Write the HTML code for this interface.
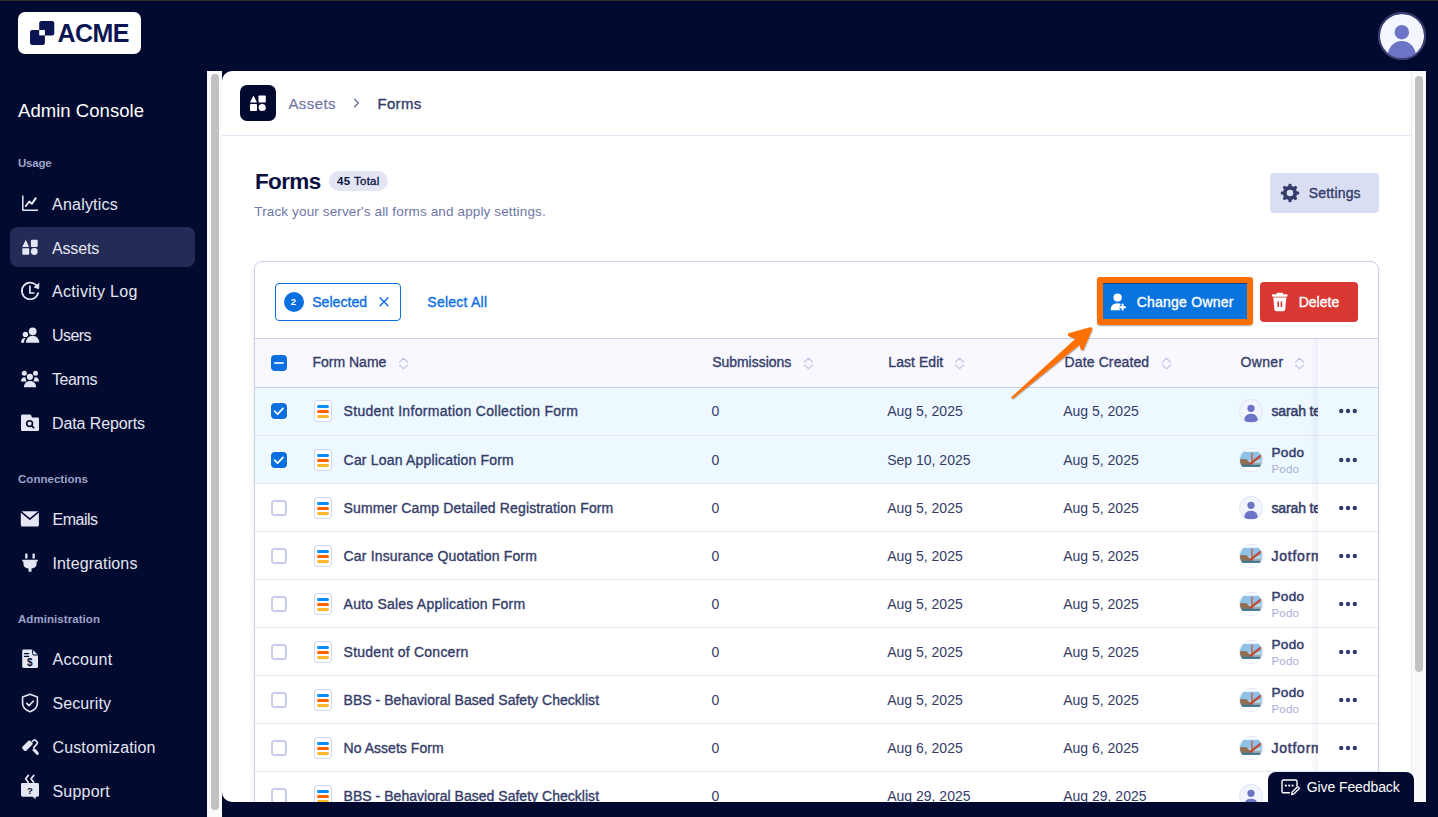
<!DOCTYPE html>
<html><head><meta charset="utf-8"><title>Forms - Admin Console</title>
<style>
html,body{margin:0;padding:0;}
body{width:1438px;height:817px;overflow:hidden;position:relative;font-family:"Liberation Sans", sans-serif;background:#020a30;}
.t{position:absolute;white-space:pre;}
.a{position:absolute;}

</style></head><body>
<div class="a" style="left:0;top:0;width:1438px;height:1px;background:#2d2d2b"></div><div class="a" style="left:18px;top:12px;width:123px;height:42px;background:#fff;border-radius:7px"></div><svg class="a" style="left:0;top:0" width="1438" height="817" viewBox="0 0 1438 817">
<g fill="#0a1551">
<rect x="39.2" y="21" width="15.1" height="14.4" rx="2.2"/>
<rect x="30" y="30" width="14.9" height="15" rx="2.2"/>
</g>
<rect x="39.2" y="30" width="5.7" height="5.4" fill="#fff"/>
</svg><div class="t" style="left:57.5px;top:19px;font-size:25px;line-height:28px;font-weight:700;color:#0a1551;letter-spacing:-0.527px;">ACME</div><svg class="a" style="left:1377px;top:11px" width="50" height="50" viewBox="0 0 50 50">
<defs><clipPath id="avc"><circle cx="25" cy="25" r="22.5"/></clipPath></defs>
<circle cx="25" cy="25" r="23" fill="#f3f6fe" stroke="#3b3e72" stroke-width="1.8"/>
<g clip-path="url(#avc)" fill="#6c74c6">
<circle cx="24.8" cy="21.2" r="7.2"/>
<ellipse cx="24.8" cy="44.5" rx="14" ry="14.5"/>
</g>
<circle cx="25" cy="25" r="23" fill="none" stroke="#3b3e72" stroke-width="1.8"/>
</svg><div class="t" style="left:18px;top:100px;font-size:18.5px;line-height:21px;font-weight:400;color:#ffffff;letter-spacing:0.042px;">Admin Console</div><div class="t" style="left:18px;top:157px;font-size:11.5px;line-height:12px;font-weight:700;color:#9ca2c9;letter-spacing:-0.206px;">Usage</div><div class="a" style="left:10px;top:227px;width:185px;height:40px;background:#242b57;border-radius:8px"></div><div class="t" style="left:52px;top:195.5px;font-size:16px;line-height:17px;font-weight:400;color:#e4e6f3;letter-spacing:0.219px;">Analytics</div><div class="t" style="left:52px;top:239.5px;font-size:16px;line-height:17px;font-weight:400;color:#e4e6f3;letter-spacing:-0.169px;">Assets</div><div class="t" style="left:52px;top:283.3px;font-size:16px;line-height:17px;font-weight:400;color:#e4e6f3;letter-spacing:0.316px;">Activity Log</div><div class="t" style="left:52px;top:327.3px;font-size:16px;line-height:17px;font-weight:400;color:#e4e6f3;letter-spacing:-0.556px;">Users</div><div class="t" style="left:52px;top:371.3px;font-size:16px;line-height:17px;font-weight:400;color:#e4e6f3;letter-spacing:-0.425px;">Teams</div><div class="t" style="left:52px;top:415.3px;font-size:16px;line-height:17px;font-weight:400;color:#e4e6f3;letter-spacing:-0.105px;">Data Reports</div><div class="t" style="left:18px;top:473.3px;font-size:11.5px;line-height:12px;font-weight:700;color:#9ca2c9;letter-spacing:0.033px;">Connections</div><div class="t" style="left:52.5px;top:511px;font-size:16px;line-height:17px;font-weight:400;color:#e4e6f3;letter-spacing:-0.503px;">Emails</div><div class="t" style="left:52.5px;top:555px;font-size:16px;line-height:17px;font-weight:400;color:#e4e6f3;letter-spacing:0.116px;">Integrations</div><div class="t" style="left:18px;top:612.8px;font-size:11.5px;line-height:12px;font-weight:700;color:#9ca2c9;letter-spacing:0.061px;">Administration</div><div class="t" style="left:52.5px;top:651.3px;font-size:16px;line-height:17px;font-weight:400;color:#e4e6f3;letter-spacing:0.312px;">Account</div><div class="t" style="left:52.5px;top:695.3px;font-size:16px;line-height:17px;font-weight:400;color:#e4e6f3;letter-spacing:0.088px;">Security</div><div class="t" style="left:52.5px;top:739.2px;font-size:16px;line-height:17px;font-weight:400;color:#e4e6f3;letter-spacing:0.125px;">Customization</div><div class="t" style="left:52.5px;top:783.2px;font-size:16px;line-height:17px;font-weight:400;color:#e4e6f3;letter-spacing:0.193px;">Support</div><svg class="a" style="left:0;top:0" width="220" height="817" viewBox="0 0 220 817">
<g fill="none" stroke="#e4e6f3" stroke-linecap="round" stroke-linejoin="round">
 <path d="M22.8 195.5 V210.2 H38" stroke-width="1.5" stroke-linecap="butt"/>
 <path d="M25.8 206 L29.3 201.5 L31.8 203.8 L35.8 198.2" stroke-width="2"/>
</g>
<g fill="#e4e6f3">
 <path d="M25.75 239.8 L29.2 247 H22.3 Z"/>
 <rect x="30.9" y="239.8" width="6.8" height="7.2" rx="1"/>
 <rect x="22.3" y="248.2" width="6.9" height="6.6" rx="1"/>
 <circle cx="34.3" cy="251.5" r="3.4"/>
</g>
<g fill="none" stroke="#e4e6f3" stroke-width="1.7" stroke-linecap="round" stroke-linejoin="round">
 <path d="M38.2 293 A8.3 8.3 0 1 1 36.2 285.2"/>
 <path d="M29.9 286.2 V293 H33.8"/>
</g>
<path d="M38.9 283.6 L38.6 288.6 L34.2 287.2 Z" fill="#e4e6f3" stroke="#e4e6f3" stroke-width="1" stroke-linejoin="round"/>
<g fill="#e4e6f3">
 <circle cx="32.7" cy="331.3" r="3.9"/>
 <path d="M25.9 342.7 C25.9 338.5 29 335.7 32.6 335.7 C36.2 335.7 39.3 338.5 39.3 342.7 Z"/>
 <circle cx="25.4" cy="334.4" r="2.7"/>
 <path d="M21 342.7 C21 339.8 22.6 337.9 24.8 337.9 L25.6 338.1 C24.6 339.3 24.1 340.9 24.1 342.7 Z"/>
 <circle cx="24.3" cy="373.2" r="2.5"/>
 <circle cx="35.5" cy="373.2" r="2.5"/>
 <circle cx="29.9" cy="376.8" r="3.1"/>
 <path d="M21 381.6 C21 379 22.3 377.3 24.4 377.3 C25 377.3 25.4 377.5 25.8 377.7 C25.6 379 26 380.3 26.8 381.6 Z"/>
 <path d="M39 381.6 C39 379 37.7 377.3 35.6 377.3 C35 377.3 34.6 377.5 34.2 377.7 C34.4 379 34 380.3 33.2 381.6 Z"/>
 <path d="M23.9 387.3 C23.9 383.5 26.6 381.1 30 381.1 C33.4 381.1 36.1 383.5 36.1 387.3 Z"/>
 <path d="M21 415.8 Q21 414.5 22.3 414.5 H29.8 Q30.6 414.5 31.1 415.3 L32 417.6 H37.7 Q39 417.6 39 418.9 V429.7 Q39 431 37.7 431 H22.3 Q21 431 21 429.7 Z"/>
 <rect x="20.8" y="511.2" width="18.1" height="15.4" rx="1.6"/>
 <rect x="25.2" y="553.6" width="2.3" height="5" rx="0.5"/>
 <rect x="32.5" y="553.6" width="2.3" height="5" rx="0.5"/>
 <path d="M22.2 559.8 H37.8 V561.6 H36.6 V563.5 Q36.6 568.2 31.5 568.4 V571.8 H28.5 V568.4 Q23.4 568.2 23.4 563.5 V561.6 H22.2 Z"/>
 <path d="M22.2 651 Q22.2 649.6 23.6 649.6 H32.6 L38 655 V666.5 Q38 667.9 36.6 667.9 H23.6 Q22.2 667.9 22.2 666.5 Z"/>
 <rect x="-5.6" y="-2.7" width="11.2" height="5.4" rx="1.4" transform="translate(27.35 745.75) rotate(-45)"/>
 <path d="M22.2 783 H37.6 Q39 783 39 784.4 V795.3 Q39 796.7 37.6 796.7 H35.6 L35.6 799.2 L32.6 796.7 H22.4 Q21 796.7 21 795.3 V784.4 Q21 783 22.2 783 Z"/>
</g>
<g fill="none" stroke="#020a30" stroke-linecap="round" stroke-linejoin="round">
 <circle cx="29.6" cy="423.6" r="2.9" stroke-width="1.6"/>
 <path d="M31.8 425.9 L33.6 427.6" stroke-width="1.8"/>
 <path d="M21.4 512.2 L29.85 519.2 L38.3 512.2" stroke-width="1.5"/>
 <path d="M24.6 653.6 H28.6 M24.6 656.4 H28.6" stroke-width="1.3"/>
 <path d="M32.6 649.6 V653.6 Q32.6 655 34 655 H38" stroke-width="1" stroke="#020a30"/>
</g>
<text x="29.8" y="666" font-family="Liberation Sans" font-weight="700" font-size="10" fill="#020a30" text-anchor="middle">$</text>
<text x="29.9" y="793.6" font-family="Liberation Sans" font-weight="700" font-size="9.5" fill="#020a30" text-anchor="middle">?</text>
<g fill="none" stroke="#e4e6f3" stroke-width="1.6" stroke-linecap="round" stroke-linejoin="round">
 <path d="M30 694.2 L37.4 697 V703.2 Q37.4 708.8 30 711.8 Q22.6 708.8 22.6 703.2 V697 Z"/>
 <path d="M26.7 703.3 L29.1 705.6 L33.4 701"/>
 <path d="M32.4 741.4 L33.9 740 Q34.6 739.4 35.3 740.1 L37.2 742.1 Q37.9 742.9 37.2 743.6 L33.7 747.6"/>
 <path d="M34 749.8 L37.3 753.3" stroke-width="3.1"/>
 <path d="M28.4 775.4 L25.6 778.7 L28.2 782.3 M33.8 775.4 L31 778.7 L33.6 782.3" stroke-width="1.7"/>
</g>
</svg><div class="a" style="left:207px;top:71px;width:15px;height:746px;background:#fafafa"></div><div class="a" style="left:211px;top:74px;width:8px;height:736px;background:#c1c1c1;border-radius:4px"></div><div class="a" style="left:222px;top:71px;width:1204px;height:731px;background:#fff;border-radius:10px 0 0 10px;overflow:hidden"><div class="a" style="left:0px;top:63.5px;width:1189px;height:1px;background:#e3e6f5"></div><div class="a" style="left:18px;top:14px;width:36px;height:36px;background:#020a30;border-radius:7px"></div><svg class="a" style="left:28px;top:24px" width="17" height="17" viewBox="0 0 17 17"><g fill="#fff">
<path d="M3.5 0.4 L7 7.5 H0 Z"/><rect x="8.5" y="0.5" width="7.3" height="7" rx="1"/>
<rect x="0" y="9" width="7" height="7" rx="1"/><circle cx="12.2" cy="12.5" r="3.6"/></g></svg><div class="t" style="left:66.4px;top:24px;font-size:15px;line-height:17px;font-weight:400;color:#6f76a7;letter-spacing:0.414px;-webkit-text-stroke:0.2px currentColor;">Assets</div><svg class="a" style="left:130px;top:26px" width="10" height="12" viewBox="0 0 10 12"><path d="M2.6 2.2 L6.4 6 L2.6 9.8" fill="none" stroke="#6f76a7" stroke-width="1.5" stroke-linecap="round" stroke-linejoin="round"/></svg><div class="t" style="left:155.5px;top:24px;font-size:15px;line-height:17px;font-weight:400;color:#343c6a;letter-spacing:0.300px;-webkit-text-stroke:0.35px currentColor;">Forms</div><div class="t" style="left:33px;top:98px;font-size:22.5px;line-height:25px;font-weight:700;color:#0a1040;letter-spacing:-0.653px;">Forms</div><div class="a" style="left:107px;top:100px;width:59px;height:20px;background:#e3e5f5;border-radius:10px"></div><div class="t" style="left:115px;top:104px;font-size:11.5px;line-height:12px;font-weight:700;color:#0a1040;letter-spacing:0.402px;">45</div><div class="t" style="left:132px;top:104px;font-size:11.5px;line-height:12px;font-weight:400;color:#0a1040;letter-spacing:0.241px;-webkit-text-stroke:0.3px currentColor;">Total</div><div class="t" style="left:32.3px;top:132.6px;font-size:13.5px;line-height:15px;font-weight:400;color:#6f76a7;letter-spacing:0.134px;">Track your server&#x27;s all forms and apply settings.</div><div class="a" style="left:1048px;top:102px;width:109px;height:40px;background:#dadef3;border-radius:4px"></div><svg class="a" style="left:1058px;top:112px" width="20" height="20" viewBox="0 0 20 20">
<g transform="translate(10,10)" fill="#343c6a">
<circle r="7.2"/>
<g id="teeth">
<rect x="-1.6" y="-9.2" width="3.2" height="4" rx="1.2"/>
<rect x="-1.6" y="-9.2" width="3.2" height="4" rx="1.2" transform="rotate(45)"/>
<rect x="-1.6" y="-9.2" width="3.2" height="4" rx="1.2" transform="rotate(90)"/>
<rect x="-1.6" y="-9.2" width="3.2" height="4" rx="1.2" transform="rotate(135)"/>
<rect x="-1.6" y="-9.2" width="3.2" height="4" rx="1.2" transform="rotate(180)"/>
<rect x="-1.6" y="-9.2" width="3.2" height="4" rx="1.2" transform="rotate(225)"/>
<rect x="-1.6" y="-9.2" width="3.2" height="4" rx="1.2" transform="rotate(270)"/>
<rect x="-1.6" y="-9.2" width="3.2" height="4" rx="1.2" transform="rotate(315)"/>
</g>
<circle r="3.3" fill="#dadef3"/>
</g></svg><div class="t" style="left:1086.8px;top:113.7px;font-size:14px;line-height:16px;font-weight:400;color:#343c6a;letter-spacing:0.176px;-webkit-text-stroke:0.35px currentColor;">Settings</div><div class="a" style="left:27px;top:197px;width:5px;height:560px;background:linear-gradient(to right, rgba(0,0,0,0), rgba(0,0,0,0.035))"></div><div class="a" style="left:1157px;top:197px;width:4px;height:560px;background:linear-gradient(to left, rgba(0,0,0,0), rgba(0,0,0,0.03))"></div><div class="a" style="left:32px;top:190px;width:1125px;height:600px;box-sizing:border-box;border:1px solid #c9ceec;border-radius:8px"></div><div class="a" style="left:53px;top:212px;width:126px;height:38px;box-sizing:border-box;border:1px solid #0a6fdf;border-radius:4px"></div><div class="a" style="left:62px;top:221px;width:20px;height:20px;background:#0a6fdf;border-radius:50%"></div><div class="t" style="left:68.8px;top:225.3px;font-size:9.5px;line-height:11px;font-weight:700;color:#fff;">2</div><div class="t" style="left:90.2px;top:222.8px;font-size:14px;line-height:16px;font-weight:400;color:#0a6fdf;letter-spacing:0.064px;-webkit-text-stroke:0.35px currentColor;">Selected</div><svg class="a" style="left:156px;top:225px" width="12" height="12" viewBox="0 0 12 12"><path d="M2 1.7 L10 9.7 M10 1.7 L2 9.7" stroke="#0a6fdf" stroke-width="1.4" stroke-linecap="round"/></svg><div class="t" style="left:205.3px;top:222.8px;font-size:14px;line-height:16px;font-weight:400;color:#0a6fdf;letter-spacing:0.241px;-webkit-text-stroke:0.35px currentColor;">Select All</div><div class="a" style="left:1038px;top:211px;width:98px;height:40px;background:#d93832;border-radius:4px"></div><svg class="a" style="left:1049px;top:221px" width="18" height="20" viewBox="0 0 18 20">
<g fill="#fff"><rect x="1" y="2.2" width="15.6" height="2.6" rx="1"/><rect x="5.5" y="0.8" width="6.6" height="2.4" rx="1"/>
<path d="M2.3 5.6 H15.3 L14.2 17.6 Q14 19.3 12.3 19.3 H5.3 Q3.6 19.3 3.4 17.6 Z"/></g>
<g fill="#d93832"><rect x="6.4" y="9.2" width="1.6" height="6" rx="0.8"/><rect x="9.6" y="9.2" width="1.6" height="6" rx="0.8"/></g></svg><div class="t" style="left:1076.7px;top:223px;font-size:14px;line-height:16px;font-weight:400;color:#fff;letter-spacing:0.005px;-webkit-text-stroke:0.35px currentColor;">Delete</div><div class="a" style="left:880px;top:211px;width:146px;height:40px;background:#0a74de;border-radius:4px"></div><svg class="a" style="left:887px;top:221px" width="20" height="20" viewBox="0 0 20 20">
<g fill="#fff"><circle cx="8.6" cy="5.6" r="4.1"/><path d="M1.6 18.2 Q1.6 11.2 8.6 11.2 Q10.6 11.2 12 12.1 Q10.3 13.4 10.3 15.4 Q10.3 17 11.3 18.2 Z"/>
<rect x="12.6" y="11.6" width="2" height="7.2" rx="1"/><rect x="10" y="14.2" width="7.2" height="2" rx="1"/></g></svg><div class="t" style="left:914.7px;top:223px;font-size:14px;line-height:16px;font-weight:400;color:#fff;letter-spacing:0.236px;-webkit-text-stroke:0.35px currentColor;">Change Owner</div><div class="a" style="left:33px;top:267px;width:1123px;height:49px;background:#f8f8fe;border-top:1px solid #c9ceec;border-bottom:1px solid #c9ceec;box-sizing:border-box;height:50px"></div><div class="a" style="left:49px;top:284px;width:16px;height:16px;background:#0a6fdf;border-radius:4px"></div><div class="a" style="left:51.80000000000001px;top:291px;width:10.5px;height:2px;background:#cfe5fa;border-radius:1px"></div><div class="t" style="left:90.4px;top:283.4px;font-size:14px;line-height:16px;font-weight:400;color:#343c6a;letter-spacing:0.010px;-webkit-text-stroke:0.35px currentColor;">Form Name</div><svg class="a" style="left:175.5px;top:285.5px" width="11" height="13" viewBox="0 0 11 13"><path d="M1.5 5 L5.5 1.2 L9.5 5 M1.5 8 L5.5 11.8 L9.5 8" fill="none" stroke="#c5cae9" stroke-width="1.3" stroke-linecap="round" stroke-linejoin="round"/></svg><div class="t" style="left:490.2px;top:283.4px;font-size:14px;line-height:16px;font-weight:400;color:#343c6a;letter-spacing:-0.034px;-webkit-text-stroke:0.35px currentColor;">Submissions</div><svg class="a" style="left:580.5px;top:285.5px" width="11" height="13" viewBox="0 0 11 13"><path d="M1.5 5 L5.5 1.2 L9.5 5 M1.5 8 L5.5 11.8 L9.5 8" fill="none" stroke="#c5cae9" stroke-width="1.3" stroke-linecap="round" stroke-linejoin="round"/></svg><div class="t" style="left:666.3px;top:283.4px;font-size:14px;line-height:16px;font-weight:400;color:#343c6a;letter-spacing:0.057px;-webkit-text-stroke:0.35px currentColor;">Last Edit</div><svg class="a" style="left:731.5px;top:285.5px" width="11" height="13" viewBox="0 0 11 13"><path d="M1.5 5 L5.5 1.2 L9.5 5 M1.5 8 L5.5 11.8 L9.5 8" fill="none" stroke="#c5cae9" stroke-width="1.3" stroke-linecap="round" stroke-linejoin="round"/></svg><div class="t" style="left:842.6px;top:283.4px;font-size:14px;line-height:16px;font-weight:400;color:#343c6a;letter-spacing:0.118px;-webkit-text-stroke:0.35px currentColor;">Date Created</div><svg class="a" style="left:938.5px;top:285.5px" width="11" height="13" viewBox="0 0 11 13"><path d="M1.5 5 L5.5 1.2 L9.5 5 M1.5 8 L5.5 11.8 L9.5 8" fill="none" stroke="#c5cae9" stroke-width="1.3" stroke-linecap="round" stroke-linejoin="round"/></svg><div class="t" style="left:1018.4px;top:283.4px;font-size:14px;line-height:16px;font-weight:400;color:#343c6a;letter-spacing:0.393px;-webkit-text-stroke:0.35px currentColor;">Owner</div><svg class="a" style="left:1072px;top:285.5px" width="11" height="13" viewBox="0 0 11 13"><path d="M1.5 5 L5.5 1.2 L9.5 5 M1.5 8 L5.5 11.8 L9.5 8" fill="none" stroke="#c5cae9" stroke-width="1.3" stroke-linecap="round" stroke-linejoin="round"/></svg><div class="a" style="left:33px;top:317px;width:1123px;height:48px;background:#edf8ff;border-bottom:1px solid #e3e5f5;box-sizing:border-box"></div><div class="a" style="left:48px;top:331px;width:18px;height:18px;background:#fff;border-radius:4px"></div><div class="a" style="left:49px;top:332px;width:16px;height:16px;background:#0a6fdf;border-radius:4px"></div><svg class="a" style="left:49px;top:332px" width="16" height="16" viewBox="0 0 16 16"><path d="M3.6 8.2 L6.6 11.1 L12 5.4" fill="none" stroke="#fff" stroke-width="1.7" stroke-linecap="round" stroke-linejoin="round"/></svg><div class="a" style="left:92px;top:329px;width:18px;height:22px;box-sizing:border-box;border:1px solid #d0d4ee;border-radius:3px;background:#fff"></div><div class="a" style="left:95px;top:334px;width:12px;height:3px;background:#0a8cff;border-radius:1.5px"></div><div class="a" style="left:95px;top:339px;width:12px;height:3px;background:#ff6100;border-radius:1.5px"></div><div class="a" style="left:95px;top:344px;width:12px;height:3px;background:#ffb629;border-radius:1.5px"></div><div class="t" style="left:121.6px;top:332px;font-size:14px;line-height:16px;font-weight:400;color:#343c6a;letter-spacing:0.303px;-webkit-text-stroke:0.35px currentColor;">Student Information Collection Form</div><div class="t" style="left:489.6px;top:332px;font-size:14px;line-height:16px;font-weight:400;color:#343c6a;">0</div><div class="t" style="left:665.2px;top:332px;font-size:14px;line-height:16px;font-weight:400;color:#343c6a;">Aug 5, 2025</div><div class="t" style="left:841.2px;top:332px;font-size:14px;line-height:16px;font-weight:400;color:#343c6a;">Aug 5, 2025</div><svg class="a" style="left:1017px;top:328px" width="24" height="24" viewBox="0 0 24 24">
<defs><clipPath id="oc0"><circle cx="12" cy="12" r="11.5"/></clipPath></defs>
<circle cx="12" cy="12" r="11.5" fill="#f3f5fe" stroke="#dfe2f5" stroke-width="1"/>
<g fill="#6c74c6" clip-path="url(#oc0)"><circle cx="12" cy="9.3" r="3.6"/><path d="M5 23 Q5 14.8 12 14.8 Q19 14.8 19 23 Z"/></g></svg><div class="t" style="left:1049.5px;top:332px;font-size:14px;line-height:16px;font-weight:400;color:#343c6a;letter-spacing:-0.148px;-webkit-text-stroke:0.5px currentColor;">sarah test</div><div class="a" style="left:33px;top:365px;width:1123px;height:48px;background:#edf8ff;border-bottom:1px solid #e3e5f5;box-sizing:border-box"></div><div class="a" style="left:48px;top:380px;width:18px;height:18px;background:#fff;border-radius:4px"></div><div class="a" style="left:49px;top:381px;width:16px;height:16px;background:#0a6fdf;border-radius:4px"></div><svg class="a" style="left:49px;top:381px" width="16" height="16" viewBox="0 0 16 16"><path d="M3.6 8.2 L6.6 11.1 L12 5.4" fill="none" stroke="#fff" stroke-width="1.7" stroke-linecap="round" stroke-linejoin="round"/></svg><div class="a" style="left:92px;top:378px;width:18px;height:22px;box-sizing:border-box;border:1px solid #d0d4ee;border-radius:3px;background:#fff"></div><div class="a" style="left:95px;top:383px;width:12px;height:3px;background:#0a8cff;border-radius:1.5px"></div><div class="a" style="left:95px;top:388px;width:12px;height:3px;background:#ff6100;border-radius:1.5px"></div><div class="a" style="left:95px;top:393px;width:12px;height:3px;background:#ffb629;border-radius:1.5px"></div><div class="t" style="left:121.6px;top:381px;font-size:14px;line-height:16px;font-weight:400;color:#343c6a;letter-spacing:0.185px;-webkit-text-stroke:0.35px currentColor;">Car Loan Application Form</div><div class="t" style="left:489.6px;top:381px;font-size:14px;line-height:16px;font-weight:400;color:#343c6a;">0</div><div class="t" style="left:665.2px;top:381px;font-size:14px;line-height:16px;font-weight:400;color:#343c6a;">Sep 10, 2025</div><div class="t" style="left:841.2px;top:381px;font-size:14px;line-height:16px;font-weight:400;color:#343c6a;">Aug 5, 2025</div><svg class="a" style="left:1017px;top:377px" width="24" height="24" viewBox="0 0 24 24">
<defs><clipPath id="oc1"><circle cx="12" cy="12" r="11"/></clipPath></defs>
<circle cx="12" cy="12" r="11.5" fill="#fff" stroke="#e2e4f5" stroke-width="1"/>
<g clip-path="url(#oc1)">
<rect x="0" y="0" width="24" height="24" fill="#fff"/>
<rect x="0" y="3.7" width="24" height="15.2" fill="#8fc2e9"/>
<rect x="0" y="12" width="24" height="5" fill="#b4d6ee"/>
<rect x="12" y="14.6" width="12" height="2.4" fill="#a3aeb2"/>
<path d="M0 11.4 Q3.5 10.6 7.5 11.2 Q9.5 12.5 11.8 16.2 L11.8 17 L0 17 Z" fill="#8e6f55"/>
<rect x="12.2" y="4.9" width="1.4" height="12.1" fill="#c9573f"/>
<path d="M11 16 L23.5 6.3" stroke="#bd4d39" stroke-width="2.3"/>
<rect x="0" y="16.8" width="24" height="2.1" fill="#3c7796"/>
</g></svg><div class="t" style="left:1049.5px;top:374px;font-size:13.5px;line-height:15px;font-weight:400;color:#343c6a;letter-spacing:0.367px;-webkit-text-stroke:0.5px currentColor;">Podo</div><div class="t" style="left:1049.5px;top:392px;font-size:11.5px;line-height:12px;font-weight:400;color:#a9aed6;letter-spacing:0.160px;">Podo</div><div class="a" style="left:33px;top:413px;width:1123px;height:48px;background:#ffffff;border-bottom:1px solid #e3e5f5;box-sizing:border-box"></div><div class="a" style="left:49px;top:429px;width:16px;height:16px;box-sizing:border-box;border:2px solid #c8cdeb;border-radius:3.5px;background:#fff"></div><div class="a" style="left:92px;top:426px;width:18px;height:22px;box-sizing:border-box;border:1px solid #d0d4ee;border-radius:3px;background:#fff"></div><div class="a" style="left:95px;top:431px;width:12px;height:3px;background:#0a8cff;border-radius:1.5px"></div><div class="a" style="left:95px;top:436px;width:12px;height:3px;background:#ff6100;border-radius:1.5px"></div><div class="a" style="left:95px;top:441px;width:12px;height:3px;background:#ffb629;border-radius:1.5px"></div><div class="t" style="left:121.6px;top:429px;font-size:14px;line-height:16px;font-weight:400;color:#343c6a;letter-spacing:0.139px;-webkit-text-stroke:0.35px currentColor;">Summer Camp Detailed Registration Form</div><div class="t" style="left:489.6px;top:429px;font-size:14px;line-height:16px;font-weight:400;color:#343c6a;">0</div><div class="t" style="left:665.2px;top:429px;font-size:14px;line-height:16px;font-weight:400;color:#343c6a;">Aug 5, 2025</div><div class="t" style="left:841.2px;top:429px;font-size:14px;line-height:16px;font-weight:400;color:#343c6a;">Aug 5, 2025</div><svg class="a" style="left:1017px;top:425px" width="24" height="24" viewBox="0 0 24 24">
<defs><clipPath id="oc2"><circle cx="12" cy="12" r="11.5"/></clipPath></defs>
<circle cx="12" cy="12" r="11.5" fill="#f3f5fe" stroke="#dfe2f5" stroke-width="1"/>
<g fill="#6c74c6" clip-path="url(#oc2)"><circle cx="12" cy="9.3" r="3.6"/><path d="M5 23 Q5 14.8 12 14.8 Q19 14.8 19 23 Z"/></g></svg><div class="t" style="left:1049.5px;top:429px;font-size:14px;line-height:16px;font-weight:400;color:#343c6a;letter-spacing:-0.148px;-webkit-text-stroke:0.5px currentColor;">sarah test</div><div class="a" style="left:33px;top:461px;width:1123px;height:48px;background:#ffffff;border-bottom:1px solid #e3e5f5;box-sizing:border-box"></div><div class="a" style="left:49px;top:477px;width:16px;height:16px;box-sizing:border-box;border:2px solid #c8cdeb;border-radius:3.5px;background:#fff"></div><div class="a" style="left:92px;top:474px;width:18px;height:22px;box-sizing:border-box;border:1px solid #d0d4ee;border-radius:3px;background:#fff"></div><div class="a" style="left:95px;top:479px;width:12px;height:3px;background:#0a8cff;border-radius:1.5px"></div><div class="a" style="left:95px;top:484px;width:12px;height:3px;background:#ff6100;border-radius:1.5px"></div><div class="a" style="left:95px;top:489px;width:12px;height:3px;background:#ffb629;border-radius:1.5px"></div><div class="t" style="left:121.6px;top:477px;font-size:14px;line-height:16px;font-weight:400;color:#343c6a;letter-spacing:0.154px;-webkit-text-stroke:0.35px currentColor;">Car Insurance Quotation Form</div><div class="t" style="left:489.6px;top:477px;font-size:14px;line-height:16px;font-weight:400;color:#343c6a;">0</div><div class="t" style="left:665.2px;top:477px;font-size:14px;line-height:16px;font-weight:400;color:#343c6a;">Aug 5, 2025</div><div class="t" style="left:841.2px;top:477px;font-size:14px;line-height:16px;font-weight:400;color:#343c6a;">Aug 5, 2025</div><svg class="a" style="left:1017px;top:473px" width="24" height="24" viewBox="0 0 24 24">
<defs><clipPath id="oc3"><circle cx="12" cy="12" r="11"/></clipPath></defs>
<circle cx="12" cy="12" r="11.5" fill="#fff" stroke="#e2e4f5" stroke-width="1"/>
<g clip-path="url(#oc3)">
<rect x="0" y="0" width="24" height="24" fill="#fff"/>
<rect x="0" y="3.7" width="24" height="15.2" fill="#8fc2e9"/>
<rect x="0" y="12" width="24" height="5" fill="#b4d6ee"/>
<rect x="12" y="14.6" width="12" height="2.4" fill="#a3aeb2"/>
<path d="M0 11.4 Q3.5 10.6 7.5 11.2 Q9.5 12.5 11.8 16.2 L11.8 17 L0 17 Z" fill="#8e6f55"/>
<rect x="12.2" y="4.9" width="1.4" height="12.1" fill="#c9573f"/>
<path d="M11 16 L23.5 6.3" stroke="#bd4d39" stroke-width="2.3"/>
<rect x="0" y="16.8" width="24" height="2.1" fill="#3c7796"/>
</g></svg><div class="t" style="left:1049.5px;top:477px;font-size:14px;line-height:16px;font-weight:400;color:#343c6a;letter-spacing:0.759px;-webkit-text-stroke:0.5px currentColor;">Jotform</div><div class="a" style="left:33px;top:509px;width:1123px;height:48px;background:#ffffff;border-bottom:1px solid #e3e5f5;box-sizing:border-box"></div><div class="a" style="left:49px;top:525px;width:16px;height:16px;box-sizing:border-box;border:2px solid #c8cdeb;border-radius:3.5px;background:#fff"></div><div class="a" style="left:92px;top:522px;width:18px;height:22px;box-sizing:border-box;border:1px solid #d0d4ee;border-radius:3px;background:#fff"></div><div class="a" style="left:95px;top:527px;width:12px;height:3px;background:#0a8cff;border-radius:1.5px"></div><div class="a" style="left:95px;top:532px;width:12px;height:3px;background:#ff6100;border-radius:1.5px"></div><div class="a" style="left:95px;top:537px;width:12px;height:3px;background:#ffb629;border-radius:1.5px"></div><div class="t" style="left:121.6px;top:525px;font-size:14px;line-height:16px;font-weight:400;color:#343c6a;letter-spacing:0.219px;-webkit-text-stroke:0.35px currentColor;">Auto Sales Application Form</div><div class="t" style="left:489.6px;top:525px;font-size:14px;line-height:16px;font-weight:400;color:#343c6a;">0</div><div class="t" style="left:665.2px;top:525px;font-size:14px;line-height:16px;font-weight:400;color:#343c6a;">Aug 5, 2025</div><div class="t" style="left:841.2px;top:525px;font-size:14px;line-height:16px;font-weight:400;color:#343c6a;">Aug 5, 2025</div><svg class="a" style="left:1017px;top:521px" width="24" height="24" viewBox="0 0 24 24">
<defs><clipPath id="oc4"><circle cx="12" cy="12" r="11"/></clipPath></defs>
<circle cx="12" cy="12" r="11.5" fill="#fff" stroke="#e2e4f5" stroke-width="1"/>
<g clip-path="url(#oc4)">
<rect x="0" y="0" width="24" height="24" fill="#fff"/>
<rect x="0" y="3.7" width="24" height="15.2" fill="#8fc2e9"/>
<rect x="0" y="12" width="24" height="5" fill="#b4d6ee"/>
<rect x="12" y="14.6" width="12" height="2.4" fill="#a3aeb2"/>
<path d="M0 11.4 Q3.5 10.6 7.5 11.2 Q9.5 12.5 11.8 16.2 L11.8 17 L0 17 Z" fill="#8e6f55"/>
<rect x="12.2" y="4.9" width="1.4" height="12.1" fill="#c9573f"/>
<path d="M11 16 L23.5 6.3" stroke="#bd4d39" stroke-width="2.3"/>
<rect x="0" y="16.8" width="24" height="2.1" fill="#3c7796"/>
</g></svg><div class="t" style="left:1049.5px;top:518px;font-size:13.5px;line-height:15px;font-weight:400;color:#343c6a;letter-spacing:0.367px;-webkit-text-stroke:0.5px currentColor;">Podo</div><div class="t" style="left:1049.5px;top:536px;font-size:11.5px;line-height:12px;font-weight:400;color:#a9aed6;letter-spacing:0.160px;">Podo</div><div class="a" style="left:33px;top:557px;width:1123px;height:48px;background:#ffffff;border-bottom:1px solid #e3e5f5;box-sizing:border-box"></div><div class="a" style="left:49px;top:573px;width:16px;height:16px;box-sizing:border-box;border:2px solid #c8cdeb;border-radius:3.5px;background:#fff"></div><div class="a" style="left:92px;top:570px;width:18px;height:22px;box-sizing:border-box;border:1px solid #d0d4ee;border-radius:3px;background:#fff"></div><div class="a" style="left:95px;top:575px;width:12px;height:3px;background:#0a8cff;border-radius:1.5px"></div><div class="a" style="left:95px;top:580px;width:12px;height:3px;background:#ff6100;border-radius:1.5px"></div><div class="a" style="left:95px;top:585px;width:12px;height:3px;background:#ffb629;border-radius:1.5px"></div><div class="t" style="left:121.6px;top:573px;font-size:14px;line-height:16px;font-weight:400;color:#343c6a;letter-spacing:0.242px;-webkit-text-stroke:0.35px currentColor;">Student of Concern</div><div class="t" style="left:489.6px;top:573px;font-size:14px;line-height:16px;font-weight:400;color:#343c6a;">0</div><div class="t" style="left:665.2px;top:573px;font-size:14px;line-height:16px;font-weight:400;color:#343c6a;">Aug 5, 2025</div><div class="t" style="left:841.2px;top:573px;font-size:14px;line-height:16px;font-weight:400;color:#343c6a;">Aug 5, 2025</div><svg class="a" style="left:1017px;top:569px" width="24" height="24" viewBox="0 0 24 24">
<defs><clipPath id="oc5"><circle cx="12" cy="12" r="11"/></clipPath></defs>
<circle cx="12" cy="12" r="11.5" fill="#fff" stroke="#e2e4f5" stroke-width="1"/>
<g clip-path="url(#oc5)">
<rect x="0" y="0" width="24" height="24" fill="#fff"/>
<rect x="0" y="3.7" width="24" height="15.2" fill="#8fc2e9"/>
<rect x="0" y="12" width="24" height="5" fill="#b4d6ee"/>
<rect x="12" y="14.6" width="12" height="2.4" fill="#a3aeb2"/>
<path d="M0 11.4 Q3.5 10.6 7.5 11.2 Q9.5 12.5 11.8 16.2 L11.8 17 L0 17 Z" fill="#8e6f55"/>
<rect x="12.2" y="4.9" width="1.4" height="12.1" fill="#c9573f"/>
<path d="M11 16 L23.5 6.3" stroke="#bd4d39" stroke-width="2.3"/>
<rect x="0" y="16.8" width="24" height="2.1" fill="#3c7796"/>
</g></svg><div class="t" style="left:1049.5px;top:566px;font-size:13.5px;line-height:15px;font-weight:400;color:#343c6a;letter-spacing:0.367px;-webkit-text-stroke:0.5px currentColor;">Podo</div><div class="t" style="left:1049.5px;top:584px;font-size:11.5px;line-height:12px;font-weight:400;color:#a9aed6;letter-spacing:0.160px;">Podo</div><div class="a" style="left:33px;top:605px;width:1123px;height:48px;background:#ffffff;border-bottom:1px solid #e3e5f5;box-sizing:border-box"></div><div class="a" style="left:49px;top:621px;width:16px;height:16px;box-sizing:border-box;border:2px solid #c8cdeb;border-radius:3.5px;background:#fff"></div><div class="a" style="left:92px;top:618px;width:18px;height:22px;box-sizing:border-box;border:1px solid #d0d4ee;border-radius:3px;background:#fff"></div><div class="a" style="left:95px;top:623px;width:12px;height:3px;background:#0a8cff;border-radius:1.5px"></div><div class="a" style="left:95px;top:628px;width:12px;height:3px;background:#ff6100;border-radius:1.5px"></div><div class="a" style="left:95px;top:633px;width:12px;height:3px;background:#ffb629;border-radius:1.5px"></div><div class="t" style="left:121.6px;top:621px;font-size:14px;line-height:16px;font-weight:400;color:#343c6a;letter-spacing:0.026px;-webkit-text-stroke:0.35px currentColor;">BBS - Behavioral Based Safety Checklist</div><div class="t" style="left:489.6px;top:621px;font-size:14px;line-height:16px;font-weight:400;color:#343c6a;">0</div><div class="t" style="left:665.2px;top:621px;font-size:14px;line-height:16px;font-weight:400;color:#343c6a;">Aug 5, 2025</div><div class="t" style="left:841.2px;top:621px;font-size:14px;line-height:16px;font-weight:400;color:#343c6a;">Aug 5, 2025</div><svg class="a" style="left:1017px;top:617px" width="24" height="24" viewBox="0 0 24 24">
<defs><clipPath id="oc6"><circle cx="12" cy="12" r="11"/></clipPath></defs>
<circle cx="12" cy="12" r="11.5" fill="#fff" stroke="#e2e4f5" stroke-width="1"/>
<g clip-path="url(#oc6)">
<rect x="0" y="0" width="24" height="24" fill="#fff"/>
<rect x="0" y="3.7" width="24" height="15.2" fill="#8fc2e9"/>
<rect x="0" y="12" width="24" height="5" fill="#b4d6ee"/>
<rect x="12" y="14.6" width="12" height="2.4" fill="#a3aeb2"/>
<path d="M0 11.4 Q3.5 10.6 7.5 11.2 Q9.5 12.5 11.8 16.2 L11.8 17 L0 17 Z" fill="#8e6f55"/>
<rect x="12.2" y="4.9" width="1.4" height="12.1" fill="#c9573f"/>
<path d="M11 16 L23.5 6.3" stroke="#bd4d39" stroke-width="2.3"/>
<rect x="0" y="16.8" width="24" height="2.1" fill="#3c7796"/>
</g></svg><div class="t" style="left:1049.5px;top:614px;font-size:13.5px;line-height:15px;font-weight:400;color:#343c6a;letter-spacing:0.367px;-webkit-text-stroke:0.5px currentColor;">Podo</div><div class="t" style="left:1049.5px;top:632px;font-size:11.5px;line-height:12px;font-weight:400;color:#a9aed6;letter-spacing:0.160px;">Podo</div><div class="a" style="left:33px;top:653px;width:1123px;height:48px;background:#ffffff;border-bottom:1px solid #e3e5f5;box-sizing:border-box"></div><div class="a" style="left:49px;top:669px;width:16px;height:16px;box-sizing:border-box;border:2px solid #c8cdeb;border-radius:3.5px;background:#fff"></div><div class="a" style="left:92px;top:666px;width:18px;height:22px;box-sizing:border-box;border:1px solid #d0d4ee;border-radius:3px;background:#fff"></div><div class="a" style="left:95px;top:671px;width:12px;height:3px;background:#0a8cff;border-radius:1.5px"></div><div class="a" style="left:95px;top:676px;width:12px;height:3px;background:#ff6100;border-radius:1.5px"></div><div class="a" style="left:95px;top:681px;width:12px;height:3px;background:#ffb629;border-radius:1.5px"></div><div class="t" style="left:121.6px;top:669px;font-size:14px;line-height:16px;font-weight:400;color:#343c6a;letter-spacing:0.029px;-webkit-text-stroke:0.35px currentColor;">No Assets Form</div><div class="t" style="left:489.6px;top:669px;font-size:14px;line-height:16px;font-weight:400;color:#343c6a;">0</div><div class="t" style="left:665.2px;top:669px;font-size:14px;line-height:16px;font-weight:400;color:#343c6a;">Aug 6, 2025</div><div class="t" style="left:841.2px;top:669px;font-size:14px;line-height:16px;font-weight:400;color:#343c6a;">Aug 6, 2025</div><svg class="a" style="left:1017px;top:665px" width="24" height="24" viewBox="0 0 24 24">
<defs><clipPath id="oc7"><circle cx="12" cy="12" r="11"/></clipPath></defs>
<circle cx="12" cy="12" r="11.5" fill="#fff" stroke="#e2e4f5" stroke-width="1"/>
<g clip-path="url(#oc7)">
<rect x="0" y="0" width="24" height="24" fill="#fff"/>
<rect x="0" y="3.7" width="24" height="15.2" fill="#8fc2e9"/>
<rect x="0" y="12" width="24" height="5" fill="#b4d6ee"/>
<rect x="12" y="14.6" width="12" height="2.4" fill="#a3aeb2"/>
<path d="M0 11.4 Q3.5 10.6 7.5 11.2 Q9.5 12.5 11.8 16.2 L11.8 17 L0 17 Z" fill="#8e6f55"/>
<rect x="12.2" y="4.9" width="1.4" height="12.1" fill="#c9573f"/>
<path d="M11 16 L23.5 6.3" stroke="#bd4d39" stroke-width="2.3"/>
<rect x="0" y="16.8" width="24" height="2.1" fill="#3c7796"/>
</g></svg><div class="t" style="left:1049.5px;top:669px;font-size:14px;line-height:16px;font-weight:400;color:#343c6a;letter-spacing:0.759px;-webkit-text-stroke:0.5px currentColor;">Jotform</div><div class="a" style="left:33px;top:701px;width:1123px;height:48px;background:#ffffff;border-bottom:1px solid #e3e5f5;box-sizing:border-box"></div><div class="a" style="left:49px;top:717px;width:16px;height:16px;box-sizing:border-box;border:2px solid #c8cdeb;border-radius:3.5px;background:#fff"></div><div class="a" style="left:92px;top:714px;width:18px;height:22px;box-sizing:border-box;border:1px solid #d0d4ee;border-radius:3px;background:#fff"></div><div class="a" style="left:95px;top:719px;width:12px;height:3px;background:#0a8cff;border-radius:1.5px"></div><div class="a" style="left:95px;top:724px;width:12px;height:3px;background:#ff6100;border-radius:1.5px"></div><div class="a" style="left:95px;top:729px;width:12px;height:3px;background:#ffb629;border-radius:1.5px"></div><div class="t" style="left:121.6px;top:717px;font-size:14px;line-height:16px;font-weight:400;color:#343c6a;letter-spacing:0.026px;-webkit-text-stroke:0.35px currentColor;">BBS - Behavioral Based Safety Checklist</div><div class="t" style="left:489.6px;top:717px;font-size:14px;line-height:16px;font-weight:400;color:#343c6a;">0</div><div class="t" style="left:665.2px;top:717px;font-size:14px;line-height:16px;font-weight:400;color:#343c6a;">Aug 29, 2025</div><div class="t" style="left:841.2px;top:717px;font-size:14px;line-height:16px;font-weight:400;color:#343c6a;">Aug 29, 2025</div><svg class="a" style="left:1017px;top:713px" width="24" height="24" viewBox="0 0 24 24">
<defs><clipPath id="oc8"><circle cx="12" cy="12" r="11.5"/></clipPath></defs>
<circle cx="12" cy="12" r="11.5" fill="#f3f5fe" stroke="#dfe2f5" stroke-width="1"/>
<g fill="#6c74c6" clip-path="url(#oc8)"><circle cx="12" cy="9.3" r="3.6"/><path d="M5 23 Q5 14.8 12 14.8 Q19 14.8 19 23 Z"/></g></svg><div class="t" style="left:1049.5px;top:717px;font-size:14px;line-height:16px;font-weight:400;color:#343c6a;letter-spacing:-0.148px;-webkit-text-stroke:0.5px currentColor;">sarah test</div><div class="a" style="left:1096px;top:316px;width:60px;height:432px;background:transparent"></div><div class="a" style="left:1096px;top:317px;width:60px;height:47px;background:#edf8ff"></div><svg class="a" style="left:1116px;top:336px" width="20" height="8" viewBox="0 0 20 8"><g fill="#343c6a"><circle cx="3.2" cy="4" r="2.2"/><circle cx="10" cy="4" r="2.2"/><circle cx="16.8" cy="4" r="2.2"/></g></svg><div class="a" style="left:1096px;top:365px;width:60px;height:47px;background:#edf8ff"></div><svg class="a" style="left:1116px;top:385px" width="20" height="8" viewBox="0 0 20 8"><g fill="#343c6a"><circle cx="3.2" cy="4" r="2.2"/><circle cx="10" cy="4" r="2.2"/><circle cx="16.8" cy="4" r="2.2"/></g></svg><div class="a" style="left:1096px;top:413px;width:60px;height:47px;background:#ffffff"></div><svg class="a" style="left:1116px;top:433px" width="20" height="8" viewBox="0 0 20 8"><g fill="#343c6a"><circle cx="3.2" cy="4" r="2.2"/><circle cx="10" cy="4" r="2.2"/><circle cx="16.8" cy="4" r="2.2"/></g></svg><div class="a" style="left:1096px;top:461px;width:60px;height:47px;background:#ffffff"></div><svg class="a" style="left:1116px;top:481px" width="20" height="8" viewBox="0 0 20 8"><g fill="#343c6a"><circle cx="3.2" cy="4" r="2.2"/><circle cx="10" cy="4" r="2.2"/><circle cx="16.8" cy="4" r="2.2"/></g></svg><div class="a" style="left:1096px;top:509px;width:60px;height:47px;background:#ffffff"></div><svg class="a" style="left:1116px;top:529px" width="20" height="8" viewBox="0 0 20 8"><g fill="#343c6a"><circle cx="3.2" cy="4" r="2.2"/><circle cx="10" cy="4" r="2.2"/><circle cx="16.8" cy="4" r="2.2"/></g></svg><div class="a" style="left:1096px;top:557px;width:60px;height:47px;background:#ffffff"></div><svg class="a" style="left:1116px;top:577px" width="20" height="8" viewBox="0 0 20 8"><g fill="#343c6a"><circle cx="3.2" cy="4" r="2.2"/><circle cx="10" cy="4" r="2.2"/><circle cx="16.8" cy="4" r="2.2"/></g></svg><div class="a" style="left:1096px;top:605px;width:60px;height:47px;background:#ffffff"></div><svg class="a" style="left:1116px;top:625px" width="20" height="8" viewBox="0 0 20 8"><g fill="#343c6a"><circle cx="3.2" cy="4" r="2.2"/><circle cx="10" cy="4" r="2.2"/><circle cx="16.8" cy="4" r="2.2"/></g></svg><div class="a" style="left:1096px;top:653px;width:60px;height:47px;background:#ffffff"></div><svg class="a" style="left:1116px;top:673px" width="20" height="8" viewBox="0 0 20 8"><g fill="#343c6a"><circle cx="3.2" cy="4" r="2.2"/><circle cx="10" cy="4" r="2.2"/><circle cx="16.8" cy="4" r="2.2"/></g></svg><div class="a" style="left:1096px;top:701px;width:60px;height:47px;background:#ffffff"></div><svg class="a" style="left:1116px;top:721px" width="20" height="8" viewBox="0 0 20 8"><g fill="#343c6a"><circle cx="3.2" cy="4" r="2.2"/><circle cx="10" cy="4" r="2.2"/><circle cx="16.8" cy="4" r="2.2"/></g></svg><div class="a" style="left:1096px;top:268px;width:60px;height:48px;background:#f8f8fe"></div><div class="a" style="left:1088px;top:267px;width:8px;height:470px;background:linear-gradient(to right, rgba(40,50,120,0), rgba(40,50,120,0.05))"></div><div class="a" style="left:1156px;top:199px;width:1px;height:560px;background:#c9ceec"></div><div class="a" style="left:32px;top:199px;width:1px;height:560px;background:#c9ceec"></div><div class="a" style="left:1189px;top:0px;width:15px;height:731px;background:#fafafa;border-left:1px solid #ececec;box-sizing:border-box"></div><div class="a" style="left:1193px;top:5px;width:8px;height:596px;background:#c1c1c1;border-radius:4px"></div></div><div class="a" style="left:1268px;top:772px;width:146px;height:45px;background:#020a30;border-radius:8px 8px 0 0"></div><svg class="a" style="left:1281px;top:779px" width="19" height="17" viewBox="0 0 19 17">
<path d="M8.5 13.8 H2.6 Q1 13.8 1 12.2 V2.6 Q1 1 2.6 1 H14.4 Q16 1 16 2.6 V7" fill="none" stroke="#fff" stroke-width="1.4" stroke-linecap="round"/>
<g fill="#fff"><circle cx="4.8" cy="6.6" r="1.15"/><circle cx="8.2" cy="6.6" r="1.15"/><circle cx="11.6" cy="6.6" r="1.15"/></g>
<path d="M10.6 15.6 L11.2 13 L16 8.2 Q16.9 7.4 17.8 8.3 Q18.6 9.2 17.8 10 L13 14.8 Z" fill="none" stroke="#fff" stroke-width="1.3" stroke-linejoin="round"/>
</svg><div class="t" style="left:1306.7px;top:778.7px;font-size:14px;line-height:16px;font-weight:400;color:#ffffff;letter-spacing:-0.090px;">Give Feedback</div><div class="a" style="left:1097px;top:277px;width:156px;height:48px;box-sizing:border-box;border:6px solid #ff6f00;border-radius:3px;box-shadow:0 1px 1.5px rgba(0,0,0,0.35), inset 0 1px 0 #0b3f86;z-index:10"></div><svg class="a" style="left:0;top:0;z-index:11" width="1438" height="817" viewBox="0 0 1438 817">
<defs><filter id="sh" x="-20%" y="-20%" width="140%" height="140%"><feDropShadow dx="0.6" dy="1" stdDeviation="0.7" flood-color="#000" flood-opacity="0.35"/></filter></defs>
<g filter="url(#sh)" fill="#ff7000">
<path d="M1011 397.6 L1077.6 336.8 L1081.6 343 L1012.6 398.8 Z"/>
<path d="M1069.6 334.6 L1090.6 328.9 L1082.2 348.4 L1080.6 342.8 L1077.4 337.6 Z" stroke="#ff7000" stroke-width="3.4" stroke-linejoin="round"/>
</g>
</svg>
</body></html>
